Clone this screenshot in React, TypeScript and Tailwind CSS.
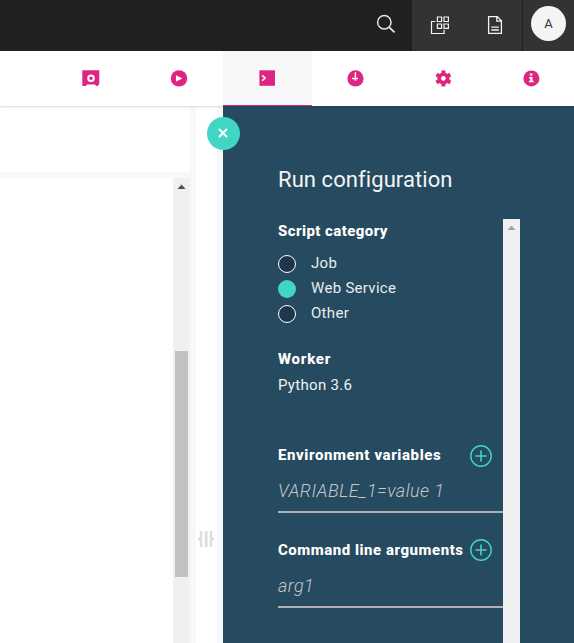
import type { ReactNode } from "react";

const svgBase = "block shrink-0";

function SearchIcon() {
  return (
    <svg className={svgBase} width="20" height="20" viewBox="0 0 20 20" fill="none" stroke="#e4e4e4" strokeWidth="1.5">
      <circle cx="8.3" cy="8.3" r="6.7" />
      <path d="M13.1 13.1 18.5 18.4" strokeWidth="1.8" />
    </svg>
  );
}

function AppsIcon() {
  return (
    <svg className={svgBase} width="20" height="20" viewBox="0 0 20 20" fill="none" stroke="#f2f2f2" strokeWidth="1.2">
      <path d="M5.4 6.5H1.5v12h12.6v-3.7" />
      <path d="M7.4 2h4.2v4.5H7.4zM14 2h4.4v4.5H14zM7.4 9h4.2v4.4H7.4zM14 9h4.4v4.4H14z" />
    </svg>
  );
}

function DocumentIcon() {
  return (
    <svg className={svgBase} width="20" height="20" viewBox="0 0 20 20" fill="none" stroke="#f2f2f2" strokeWidth="1.3">
      <path d="M3.6 1.6h8.7l4.1 4.2v12.6H3.6zM11.8 1.8v4.4h4.4M6.3 12.2h7.6M6.3 15h7.6" />
    </svg>
  );
}

function SafeIcon() {
  return (
    <svg className={svgBase} width="18" height="18" viewBox="0 0 18 18">
      <path fill="#dc267f" d="M.3 1.3h17v13.5L15.7 17h-1.5L13 15.6H5L4 17H.3z" />
      <circle cx="9" cy="9.2" r="2.8" fill="none" stroke="#fff" strokeWidth="2" />
    </svg>
  );
}

function PlayIcon() {
  return (
    <svg className={svgBase} width="18" height="18" viewBox="0 0 18 18">
      <circle cx="9" cy="9.4" r="8.2" fill="#dc267f" />
      <path d="M6 6.3 12.4 9.4 6 12.5z" fill="#fff" />
    </svg>
  );
}

function TerminalIcon() {
  return (
    <svg className={svgBase} width="18" height="18" viewBox="0 0 18 18">
      <path d="M1.4 1.3h15.6v15.5H1.4z" fill="#dc267f" />
      <path d="M4.2 6.2 7 9 4.2 11.8" fill="none" stroke="#fff" strokeWidth="1.6" />
    </svg>
  );
}

function ClockIcon() {
  return (
    <svg className={svgBase} width="18" height="18" viewBox="0 0 18 18">
      <circle cx="9.5" cy="9.4" r="8.1" fill="#dc267f" />
      <path d="M9.4 3.2v8.6M6 9.5h6" fill="none" stroke="#fff" strokeWidth="1.4" />
    </svg>
  );
}

function GearIcon() {
  return (
    <svg className={svgBase} width="18" height="18" viewBox="0 0 18 18">
      <g fill="#dc267f">
        <circle cx="9.4" cy="9.4" r="6" />
        <path d="M7.4 1.4h4v16h-4z" />
        <path d="M7.4 1.4h4v16h-4z" transform="rotate(60 9.4 9.4)" />
        <path d="M7.4 1.4h4v16h-4z" transform="rotate(120 9.4 9.4)" />
      </g>
      <circle cx="9.4" cy="9.4" r="2.3" fill="#fff" />
    </svg>
  );
}

function InfoIcon() {
  return (
    <svg className={svgBase} width="18" height="18" viewBox="0 0 18 18">
      <circle cx="9.4" cy="9.4" r="8" fill="#dc267f" />
      <path d="M7.8 4.6h2.6v2H7.8zM7.2 7.9h3.3v3.9h1.2v1.5H6.9v-1.5h1.3V9.4h-1z" fill="#fff" />
    </svg>
  );
}

function AddIcon() {
  return (
    <svg className={svgBase} width="22" height="22" viewBox="0 0 22 22" fill="none" stroke="#41d6c3" strokeWidth="1.4">
      <circle cx="11" cy="11" r="10.2" />
      <path d="M11 5.4v11.2M5.4 11h11.2" strokeWidth="1.6" />
    </svg>
  );
}

function GripIcon() {
  return (
    <svg className={svgBase} width="18" height="18" viewBox="0 0 18 18" fill="#dedede">
      <path d="M2.8 1h2.4v16H2.8v-6L.8 9.5v-1l2-1.5zM7.6 1h3v16h-3zM12.8 1h2.4v6l2 1.5v1l-2 1.5v6h-2.4z" />
    </svg>
  );
}

function Tab({ active, children }: { active?: boolean; children: ReactNode }) {
  return (
    <button
      className={
        active
          ? "flex h-[55px] w-[89px] shrink-0 items-center justify-center border-b border-[#dc267f] bg-[#f8f8fb] pr-px"
          : "flex h-[55px] w-[88px] shrink-0 items-center justify-center pb-px"
      }
    >
      {children}
    </button>
  );
}

function Radio({ label, checked }: { label: string; checked?: boolean }) {
  return (
    <label className="flex h-[25px] items-center">
      <span
        className={
          checked
            ? "mt-px size-[18px] rounded-full bg-[#41d6c3]"
            : "mt-px size-[18px] rounded-full border border-white bg-[#20364c]"
        }
      />
      <span className="-mt-px ml-[15px] text-[15px] tracking-[0.3px]">{label}</span>
    </label>
  );
}

function Field({ label, placeholder, labelClass, iconClass }: { label: string; placeholder: string; labelClass: string; iconClass: string }) {
  return (
    <section className="h-[95px]">
      <div className="flex h-6 items-center justify-between pr-[11px]">
        <h3 className={`-mt-px whitespace-nowrap text-[15px] font-extrabold ${labelClass}`}>{label}</h3>
        <span className={iconClass}>
          <AddIcon />
        </span>
      </div>
      <div className="flex h-[45px] items-center border-b-2 border-[#b0b0b3] pt-[2px]">
        <span className="whitespace-nowrap text-[18px] font-light tracking-[0.42px] text-[#c3c7ca] italic">{placeholder}</span>
      </div>
    </section>
  );
}

export default function App() {
  return (
    <div className="flex h-[643px] w-[574px] flex-col overflow-hidden bg-white font-['Roboto','Liberation_Sans',sans-serif]">
      <header className="flex h-[51px] shrink-0 bg-[#202020]">
        <div className="flex w-[412px] items-center justify-end pr-4 pb-[3px]">
          <SearchIcon />
        </div>
        <div className="flex w-[110px] items-center bg-[#333] pb-[2px] pl-[18px]">
          <AppsIcon />
          <span className="w-[35px]" />
          <DocumentIcon />
        </div>
        <div className="ml-px flex w-[51px] items-center bg-[#333] pb-1 pl-2">
          <span className="flex size-[35px] shrink-0 items-center justify-center rounded-full bg-[#f4f4f4] text-[13px] text-[#333]">A</span>
        </div>
      </header>

      <nav className="relative z-10 flex h-[55px] shrink-0 bg-white pl-[47px] shadow-[0_1px_2px_rgba(0,0,0,0.15)]">
        <Tab><SafeIcon /></Tab>
        <Tab><PlayIcon /></Tab>
        <Tab active><TerminalIcon /></Tab>
        <div className="-ml-px flex">
          <Tab><ClockIcon /></Tab>
          <Tab><GearIcon /></Tab>
          <Tab><InfoIcon /></Tab>
        </div>
      </nav>

      <main className="relative flex min-h-0 flex-1">
        <div className="flex w-[190px] shrink-0 flex-col">
          <div className="h-[72px] border-b-[6px] border-[#f8f8fb]" />
          <div className="flex flex-1 justify-end">
            <div className="flex w-[17px] flex-col items-center bg-[#f0f0f0] pt-[6px]">
              <svg className="block" width="9" height="6" viewBox="0 0 9 6"><path d="M4.5.5 8.5 5h-8z" fill="#505050" /></svg>
              <div className="mt-[161px] h-[226px] w-[13px] bg-[#c1c1c1]" />
            </div>
          </div>
        </div>
        <div className="flex w-[33px] shrink-0 justify-center border-x-[6px] border-[#f8f8fb] pt-[424px] pr-px">
          <GripIcon />
        </div>
        <aside className="flex flex-1 flex-col bg-[#264a60] pl-[55px] text-white">
          <h2 className="mt-[57px] h-[34px] text-[22px] leading-[34px] tracking-[0.08px] text-[#f4f4f6]">Run configuration</h2>
          <div className="mt-[22px] flex flex-1">
            <div className="w-[225px] shrink-0">
              <h3 className="h-6 text-[15px] leading-6 font-extrabold tracking-[0.42px]">Script category</h3>
              <div className="mt-2 text-[#e8ecef]">
                <Radio label="Job" />
                <Radio label="Web Service" checked />
                <Radio label="Other" />
              </div>
              <h3 className="mt-[21px] h-6 text-[15px] leading-6 font-extrabold tracking-[0.75px]">Worker</h3>
              <p className="mt-[2px] mb-[47px] h-6 text-[15px] leading-6 tracking-[0.3px] text-[#f0f2f4]">Python 3.6</p>
              <Field label="Environment variables" placeholder="VARIABLE_1=value 1" labelClass="tracking-[0.6px]" iconClass="" />
              <Field label="Command line arguments" placeholder="arg1" labelClass="tracking-[0.52px]" iconClass="-mt-[2px]" />
            </div>
            <div className="flex w-[17px] justify-center bg-[#f0f0f0] pt-[6px]">
              <svg className="block" width="9" height="6" viewBox="0 0 9 6"><path d="M4.5.5 8.5 5h-8z" fill="#a3a3a3" /></svg>
            </div>
          </div>
        </aside>
        <button className="absolute top-[11px] left-[207px] flex size-[33px] items-center justify-center rounded-full bg-[#41d6c3] pr-px pb-px">
          <svg className="block" width="10" height="10" viewBox="0 0 10 10" stroke="#fff" strokeWidth="2"><path d="M1 1l8 8M9 1l-8 8" /></svg>
        </button>
      </main>
    </div>
  );
}
